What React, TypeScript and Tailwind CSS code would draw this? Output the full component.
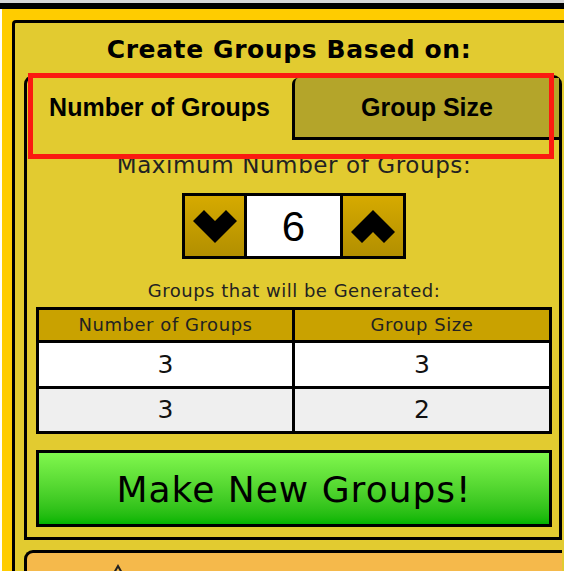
import { useState } from 'react'

type Row = { groups: number; size: number }

// Chunky chevrons used on the stepper buttons
function ChevronDown() {
  return (
    <svg width="44" height="35" viewBox="0 0 44 35" className="block">
      <polygon points="0,12 11,1 22,12 33,1 44,12 22,34" fill="#000" />
    </svg>
  )
}

function ChevronUp() {
  return (
    <svg width="44" height="35" viewBox="0 0 44 35" className="block">
      <polygon points="0,23 22,1 44,23 33,34 22,23 11,34" fill="#000" />
    </svg>
  )
}

export default function App() {
  const [count, setCount] = useState(6)
  const [tab, setTab] = useState<'number' | 'size'>('number')

  const rows: Row[] = [
    { groups: 3, size: 3 },
    { groups: 3, size: 2 },
  ]

  return (
    <div className="relative h-[571px] w-[564px] overflow-hidden bg-white font-['DejaVu_Sans',Verdana,sans-serif]">
      <div className="h-[3px] bg-[#d6d6d6]" />
      <div className="h-[6px] bg-black" />
      <div className="flex">
        <div className="w-[2px] shrink-0 bg-white" />
        <div className="flex-1 bg-[#ffcc00] pl-[10px] pt-[11px]">
          <div className="rounded-tl-[4px] border-l-[3px] border-t-[3px] border-black bg-[#e2cb30] pl-[9px]">
            <h1 className="w-[538px] pr-[8px] pt-[12px] text-center text-[25px] font-bold leading-[30px] tracking-[0.6px] text-black">
              Create Groups Based on:
            </h1>

            <div className="mt-[10px] w-[538px] rounded-t-[9px] border-[3px] border-black">
              <div className="flex h-[62px] font-['Liberation_Sans',Arial,sans-serif] text-[25px] font-bold text-black">
                <button
                  onClick={() => setTab('number')}
                  className="flex w-[265px] items-center justify-center pb-[2px]"
                >
                  Number of Groups
                </button>
                <button
                  onClick={() => setTab('size')}
                  className={
                    tab === 'size'
                      ? 'flex flex-1 items-center justify-center rounded-tl-[6px] border-l-[3px] border-black'
                      : 'flex flex-1 items-center justify-center rounded-tl-[6px] border-b-[3px] border-l-[3px] border-black bg-[#b4a52a]'
                  }
                >
                  Group Size
                </button>
              </div>

              <div className="pb-[10px] pl-[9px] pr-[7px] pt-[11px]">
                <p className="text-center text-[23px] leading-[28px] tracking-[0.6px] text-[#222]">
                  Maximum Number of Groups:
                </p>

                <div className="mt-[14px] flex justify-center">
                  <div className="flex h-[66px] border-[3px] border-black">
                    <button
                      onClick={() => setCount((c) => Math.max(1, c - 1))}
                      className="flex w-[59px] items-center justify-center bg-gradient-to-b from-[#d6aa00] to-[#b28f00]"
                    >
                      <ChevronDown />
                    </button>
                    <div className="flex w-[99px] items-center justify-center border-x-[3px] border-black bg-white font-['Liberation_Sans',Arial,sans-serif] text-[42px] text-black">
                      {count}
                    </div>
                    <button
                      onClick={() => setCount((c) => c + 1)}
                      className="flex w-[60px] items-center justify-center bg-gradient-to-b from-[#d6aa00] to-[#b28f00]"
                    >
                      <ChevronUp />
                    </button>
                  </div>
                </div>

                <p className="mt-[21px] text-center text-[18px] leading-[21px] tracking-[0.5px] text-[#222]">
                  Groups that will be Generated:
                </p>

                <div className="mt-[6px] border-[3px] border-black text-[#111]">
                  <div className="grid h-[30px] grid-cols-[253px_1fr] bg-[#c9a200] text-[18px] leading-[30px] tracking-[0.55px] text-[#222]">
                    <div className="text-center">Number of Groups</div>
                    <div className="border-l-[3px] border-black text-center">Group Size</div>
                  </div>
                  {rows.map((r, i) => (
                    <div
                      key={i}
                      className={
                        i === 0
                          ? 'grid h-[46px] grid-cols-[253px_1fr] border-t-[3px] border-black bg-white text-[25px] leading-[43px]'
                          : 'grid h-[45px] grid-cols-[253px_1fr] border-t-[3px] border-black bg-[#efefef] text-[25px] leading-[42px]'
                      }
                    >
                      <div className="text-center">{r.groups}</div>
                      <div className="border-l-[3px] border-black text-center">{r.size}</div>
                    </div>
                  ))}
                </div>

                <button className="mt-[16px] flex h-[77px] w-full items-center justify-center border-[3px] border-black bg-gradient-to-b from-[#80f74d] to-[#00b500] pt-[2px] text-[36px] tracking-[1px] text-black">
                  Make New Groups!
                </button>
              </div>
            </div>

            <div className="mt-[10px] h-[40px] w-[538px] rounded-tl-[9px] border-l-[3px] border-t-[3px] border-black bg-[#f5b94b] pl-[86px] pt-[11px]">
              <svg width="10" height="12" viewBox="0 0 10 12" className="block">
                <polyline points="1,9 5,2 9,9" fill="none" stroke="#222" strokeWidth="2" />
              </svg>
            </div>
          </div>
        </div>
      </div>

      {/* highlight frame around the tab strip */}
      <div className="pointer-events-none absolute left-[28px] top-[73px] h-[86px] w-[526px] border-[5px] border-[#fb1a10]" />
    </div>
  )
}
